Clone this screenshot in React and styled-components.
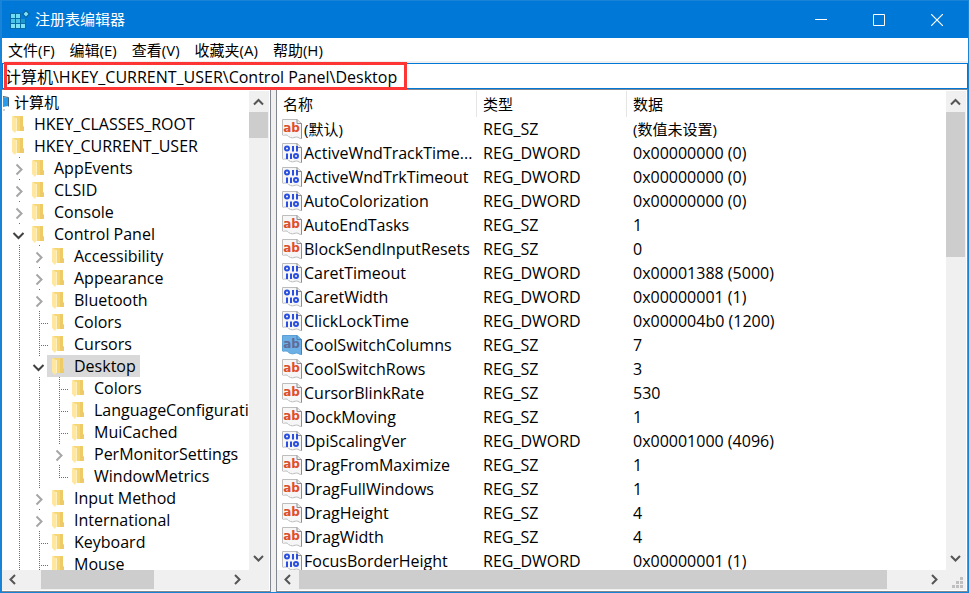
import React from 'react'
import styled, { createGlobalStyle } from 'styled-components';

const GlobalStyle = createGlobalStyle`
    * {
        box-sizing: border-box;
    }
    body {
        margin: 0;
        overflow: hidden;
    }
    button, input {
        font: inherit;
        color: inherit;
        border: 0;
        padding: 0;
        background: none;
    }
`;

const Window = styled.div`
    height: 100vh;
    display: flex;
    flex-direction: column;
    border: solid #1883d7;
    border-width: 1px 1px 1px 2px;
    background: #fff;
    color: #000;
    font-family: 'Open Sans', 'Noto Sans CJK SC', sans-serif;
    font-size: 15px;
    line-height: 22px;
    white-space: nowrap;
`;

const TitleBar = styled.header`
    display: flex;
    align-items: center;
    height: 37px;
    flex: none;
    padding: 0 2px 0 8px;
    background: #0078d7;
    color: #fff;
`;
const Title = styled.h1`
    flex: 1;
    margin: 0 0 0 5px;
    padding-bottom: 2px;
    font-size: 15px;
    font-weight: 400;
    line-height: 20px;
`;
const WindowButton = styled.button`
    width: 58px;
    height: 36px;
    display: flex;
    align-items: center;
    justify-content: center;
`;

const MenuBar = styled.nav`
    display: flex;
    align-items: center;
    gap: 15px;
    height: 25px;
    flex: none;
    padding-left: 6px;
    border-bottom: 2px solid #f0f0f0;
`;

const AddressBar = styled.div`
    position: relative;
    height: 26px;
    flex: none;
`;
const AddressInput = styled.input`
    display: block;
    width: 100%;
    height: 26px;
    padding: 0 0 1px 2px;
    border: 1px solid #0078d7;
    outline: 0;
    font-size: 16px;
`;
const Highlight = styled.div`
    position: absolute;
    top: -1px;
    left: 2px;
    width: 403px;
    height: 28px;
    border: 3px solid #fd3635;
    z-index: 1;
    pointer-events: none;
`;

const Panes = styled.main`
    flex: 1;
    min-height: 0;
    display: grid;
    grid-template-columns: 269px 1fr;
    gap: 5px;
    background: #f0f0f0;
`;
const Pane = styled.section`
    min-width: 0;
    min-height: 0;
    display: grid;
    grid-template-columns: 1fr 20px;
    grid-template-rows: 1fr 20px;
    padding: 1px 1px 1px 0;
    border: solid #828790;
    border-width: 1px 1px 1px ${props => (props.$first ? '0' : '1px')};
    background: #fff;
`;
const Viewport = styled.div`
    min-width: 0;
    min-height: 0;
    overflow: hidden;
`;
const Corner = styled.div`
    background: #f0f0f0;
    display: flex;
    align-items: flex-end;
    justify-content: flex-end;
    padding: 0 3px 2px 0;
`;

const Track = styled.div`
    display: flex;
    flex-direction: ${props => (props.$vertical ? 'column' : 'row')};
    justify-content: space-between;
    background: #f0f0f0;
`;
const ArrowButton = styled.button`
    display: flex;
    align-items: center;
    justify-content: center;
    flex: none;
    width: ${props => (props.$vertical ? '19px' : '22px')};
    height: ${props => (props.$vertical ? '21px' : '19px')};
`;
const ThumbLane = styled.div`
    flex: 1;
    display: flex;
    flex-direction: ${props => (props.$vertical ? 'column' : 'row')};
`;
const Thumb = styled.div`
    flex: none;
    background: #cdcdcd;
    width: 19px;
    height: 19px;
`;

const TreeList = styled.ul`
    margin: 0;
    padding: 0;
    list-style: none;
    font-size: 16px;
`;
const TreeRow = styled.li`
    display: flex;
    height: 22px;
    padding-left: ${props => (props.$root ? '0' : '7px')};

    svg {
        flex: none;
    }
`;
const Toggle = styled.button`
    width: 20px;
    height: 22px;
    flex: none;
`;
const TreeLabel = styled.span`
    display: flex;
    gap: 5px;
    margin-left: -2px;
    padding: 0 4px 0 2px;
    background: ${props => (props.$selected ? '#d9d9d9' : 'none')};
`;
const RootLabel = styled.span`
    display: flex;
    gap: 4px;
    font-size: 15px;
`;

const ValueTable = styled.table`
    width: 100%;
    table-layout: fixed;
    border-collapse: separate;
    border-spacing: 0;
`;
const HeadCell = styled.th`
    width: ${props => props.$width || 'auto'};
    height: 26px;
    padding: 0 0 0 6px;
    border-right: 1px solid ${props => (props.$width ? '#e5e5e5' : 'transparent')};
    font-weight: 400;
    text-align: left;
`;
const Cell = styled.td`
    height: 24px;
    padding: 0 0 0 6px;
    font-size: ${props => (props.$chinese ? '15px' : '16px')};
`;
const NameCell = styled(Cell)`
    padding-left: 5px;
`;
const NameBox = styled.div`
    display: flex;
    align-items: center;
    gap: 2px;
    height: 24px;
`;

const RegeditIcon = () => (
    <svg width="20" height="20" viewBox="0 0 20 20" aria-hidden="true">
        <path d="M0 3h11v6h5v10H0z" fill="#0a6ba8" />
        <path d="M1 4h4v4H1zM6 4h4v4H6z" fill="#6fdcf5" />
        <path d="M1 9h4v4H1zM6 9h4v4H6z" fill="#49c4e8" />
        <path d="M1 14h4v4H1zM6 14h4v4H6zM11 14h4v4h-4z" fill="#7ee3f7" />
        <path d="M11 9h4v4h-4z" fill="#1c98cf" />
        <path d="M16 0l4 4-4 4-4-4z" fill="#0a5f96" />
        <path d="M16 1.500l2.500 2.500-2.500 2.500-2.500-2.500z" fill="#7ee3f7" />
    </svg>
)

const ComputerIcon = () => (
    <svg width="8" height="22" viewBox="0 0 8 22" aria-hidden="true">
        <path d="M1 6l5 1v8l-5 1z" fill="#2a9be8" />
        <path d="M1 5.500l5.500 1v9" fill="none" stroke="#3f5f7a" />
        <path d="M1 19h2" stroke="#9aa3ad" />
    </svg>
)

const FolderIcon = () => (
    <svg width="20" height="22" viewBox="0 0 20 22" aria-hidden="true">
        <path d="M4 3h10v10l1 1v4H6z" fill="#f6d776" />
        <path d="M11 3h3v10l1 1v4h-4z" fill="#efcb68" />
        <path d="M3 3l4 2v13l-1 2-3-3z" fill="#ffe7a0" />
        <path d="M7.500 5v13" stroke="#fff0c2" />
    </svg>
)

const branches = {
    line: <path d="M10.500 0v22" />,
    leaf: <path d="M10.500 0v22M12 12.500h7" />,
    end: <path d="M10.500 0v13M12 12.500h7" />,
    closed: <path d="M10.500 0v1" />,
    open: <path d="M10.500 0v1" />,
}

const Branch = ({ kind }) => (
    <svg width="20" height="22" viewBox="0 0 20 22" aria-hidden="true">
        <g fill="none" stroke="#6d6d6d" strokeDasharray="1 1" shapeRendering="crispEdges">
            {branches[kind]}
        </g>
        {kind === 'closed' && (
            <path d="M7.500 7.500l5 5-5 5" fill="none" stroke="#a6a6a6" strokeWidth="2" />
        )}
        {kind === 'open' && (
            <path d="M4.500 10l5 5 5-5" fill="none" stroke="#404040" strokeWidth="2" />
        )}
    </svg>
)

const arrows = {
    up: 'M3 10.500l4.500-4.500 4.500 4.500',
    down: 'M3 4l4.500 4.500 4.500-4.500',
    left: 'M10 3l-4.500 4.500 4.500 4.500',
    right: 'M5 3l4.500 4.500-4.500 4.500',
}

const Arrow = ({ to }) => (
    <svg width="16" height="16" viewBox="0 0 16 16" aria-hidden="true">
        <path d={arrows[to]} fill="none" stroke="#555" strokeWidth="2" />
    </svg>
)

const Grip = () => (
    <svg width="11" height="11" viewBox="0 0 11 11" aria-hidden="true">
        <path
            d="M8 0h3v3H8zM4 4h3v3H4zM8 4h3v3H8zM0 8h3v3H0zM4 8h3v3H4zM8 8h3v3H8z"
            fill="#bfbfbf"
        />
    </svg>
)

const ValueIcon = ({ binary, selected }) => (
    <svg width="20" height="20" viewBox="0 0 20 20" aria-hidden="true">
        <path
            d="M.5.5h14.500l4.500 4v15c-2 .3-3-1.500-5-1.500s-3 1.500-6 .5-2-2.500-4.500-2.500-2.500.8-3.500 0z"
            fill={selected ? '#6cb0e6' : '#f6f6f6'}
            stroke={selected ? '#5a9fd6' : '#bdbdbd'}
        />
        <path
            d="M15 .5v4h4.500v15"
            fill="none"
            stroke={selected ? '#4581b3' : '#8c8c8c'}
        />
        {binary ? (
            <g fill="none" stroke="#2a4fe0" strokeWidth="2">
                <ellipse cx="5" cy="5.500" rx="2" ry="2" />
                <path d="M11 3v5.500M15 3v5.500M5 10.500v5.500M9 10.500v5.500" />
                <ellipse cx="14" cy="13" rx="2" ry="2" />
            </g>
        ) : (
            <text
                x="9.500"
                y="13"
                textAnchor="middle"
                fontFamily="'DejaVu Sans', sans-serif"
                fontSize="12"
                fontWeight="700"
                fill={selected ? '#5f6b98' : '#dd4f2b'}
            >
                ab
            </text>
        )}
    </svg>
)

const ScrollBar = ({ vertical, offset, size }) => {
    const [back, forward] = vertical ? ['up', 'down'] : ['left', 'right']
    const thumb = vertical
        ? { marginTop: offset, height: size }
        : { marginLeft: offset, width: size }
    return (
        <Track $vertical={vertical}>
            <ArrowButton $vertical={vertical} aria-label={back}>
                <Arrow to={back} />
            </ArrowButton>
            <ThumbLane $vertical={vertical}>
                <Thumb style={thumb} />
            </ThumbLane>
            <ArrowButton $vertical={vertical} aria-label={forward}>
                <Arrow to={forward} />
            </ArrowButton>
        </Track>
    )
}

const menus = ['文件(F)', '编辑(E)', '查看(V)', '收藏夹(A)', '帮助(H)']

// depth, name, branch kind
const keys = [
    [0, 'HKEY_CLASSES_ROOT'],
    [0, 'HKEY_CURRENT_USER'],
    [1, 'AppEvents', 'closed'],
    [1, 'CLSID', 'closed'],
    [1, 'Console', 'closed'],
    [1, 'Control Panel', 'open'],
    [2, 'Accessibility', 'closed'],
    [2, 'Appearance', 'closed'],
    [2, 'Bluetooth', 'closed'],
    [2, 'Colors', 'leaf'],
    [2, 'Cursors', 'leaf'],
    [2, 'Desktop', 'open'],
    [3, 'Colors', 'leaf'],
    [3, 'LanguageConfiguration', 'leaf'],
    [3, 'MuiCached', 'leaf'],
    [3, 'PerMonitorSettings', 'closed'],
    [3, 'WindowMetrics', 'end'],
    [2, 'Input Method', 'closed'],
    [2, 'International', 'closed'],
    [2, 'Keyboard', 'leaf'],
    [2, 'Mouse', 'leaf'],
]

const values = [
    ['(默认)', 'REG_SZ', '(数值未设置)'],
    ['ActiveWndTrackTime...', 'REG_DWORD', '0x00000000 (0)'],
    ['ActiveWndTrkTimeout', 'REG_DWORD', '0x00000000 (0)'],
    ['AutoColorization', 'REG_DWORD', '0x00000000 (0)'],
    ['AutoEndTasks', 'REG_SZ', '1'],
    ['BlockSendInputResets', 'REG_SZ', '0'],
    ['CaretTimeout', 'REG_DWORD', '0x00001388 (5000)'],
    ['CaretWidth', 'REG_DWORD', '0x00000001 (1)'],
    ['ClickLockTime', 'REG_DWORD', '0x000004b0 (1200)'],
    ['CoolSwitchColumns', 'REG_SZ', '7'],
    ['CoolSwitchRows', 'REG_SZ', '3'],
    ['CursorBlinkRate', 'REG_SZ', '530'],
    ['DockMoving', 'REG_SZ', '1'],
    ['DpiScalingVer', 'REG_DWORD', '0x00001000 (4096)'],
    ['DragFromMaximize', 'REG_SZ', '1'],
    ['DragFullWindows', 'REG_SZ', '1'],
    ['DragHeight', 'REG_SZ', '4'],
    ['DragWidth', 'REG_SZ', '4'],
    ['FocusBorderHeight', 'REG_DWORD', '0x00000001 (1)'],
]

const KeyTree = () => (
    <TreeList>
        <TreeRow $root>
            <RootLabel>
                <ComputerIcon />
                计算机
            </RootLabel>
        </TreeRow>
        {keys.map(([depth, name, kind], i) => (
            <TreeRow key={i}>
                {depth > 1 && <Branch kind="line" />}
                {depth > 2 && <Branch kind="line" />}
                {(kind === 'open' || kind === 'closed') && (
                    <Toggle aria-label={name} aria-expanded={kind === 'open'}>
                        <Branch kind={kind} />
                    </Toggle>
                )}
                {(kind === 'leaf' || kind === 'end') && <Branch kind={kind} />}
                <TreeLabel $selected={name === 'Desktop'}>
                    <FolderIcon />
                    {name}
                </TreeLabel>
            </TreeRow>
        ))}
    </TreeList>
)

const ValueList = () => (
    <ValueTable>
        <thead>
            <tr>
                <HeadCell $width="200px">名称</HeadCell>
                <HeadCell $width="150px">类型</HeadCell>
                <HeadCell>数据</HeadCell>
            </tr>
        </thead>
        <tbody>
            {values.map(([name, type, data]) => (
                <tr key={name}>
                    <NameCell $chinese={name === '(默认)'}>
                        <NameBox>
                            <ValueIcon
                                binary={type === 'REG_DWORD'}
                                selected={name === 'CoolSwitchColumns'}
                            />
                            {name}
                        </NameBox>
                    </NameCell>
                    <Cell>{type}</Cell>
                    <Cell $chinese={name === '(默认)'}>{data}</Cell>
                </tr>
            ))}
        </tbody>
    </ValueTable>
)

const App = () => {
    return (
        <>
            <GlobalStyle />
            <Window>
                <TitleBar>
                    <RegeditIcon />
                    <Title>注册表编辑器</Title>
                    <WindowButton aria-label="最小化">
                        <svg width="12" height="12" viewBox="0 0 12 12">
                            <path d="M0 5.500h12" stroke="#fff" />
                        </svg>
                    </WindowButton>
                    <WindowButton aria-label="最大化">
                        <svg width="12" height="12" viewBox="0 0 12 12">
                            <path d="M.5.5h11v11H.5z" fill="none" stroke="#fff" />
                        </svg>
                    </WindowButton>
                    <WindowButton aria-label="关闭">
                        <svg width="12" height="12" viewBox="0 0 12 12">
                            <path d="M0 0l12 12M12 0L0 12" stroke="#fff" strokeWidth="1.200" />
                        </svg>
                    </WindowButton>
                </TitleBar>
                <MenuBar>
                    {menus.map(menu => (
                        <button key={menu}>{menu}</button>
                    ))}
                </MenuBar>
                <AddressBar>
                    <AddressInput
                        aria-label="地址"
                        defaultValue="计算机\HKEY_CURRENT_USER\Control Panel\Desktop"
                    />
                    <Highlight />
                </AddressBar>
                <Panes>
                    <Pane $first>
                        <Viewport>
                            <KeyTree />
                        </Viewport>
                        <ScrollBar vertical offset={0} size={26} />
                        <ScrollBar offset={17} size={113} />
                        <Corner />
                    </Pane>
                    <Pane>
                        <Viewport>
                            <ValueList />
                        </Viewport>
                        <ScrollBar vertical offset={0} size={145} />
                        <ScrollBar offset={0} size={588} />
                        <Corner>
                            <Grip />
                        </Corner>
                    </Pane>
                </Panes>
            </Window>
        </>
    )
}

export default App
